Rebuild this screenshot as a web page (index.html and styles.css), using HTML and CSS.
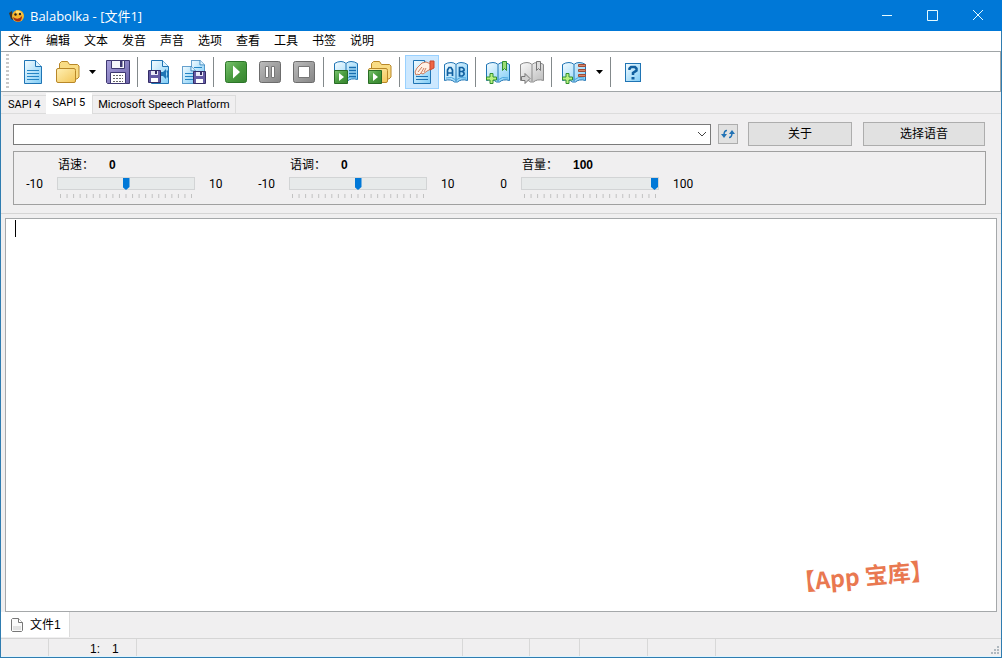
FILE: index.html
```html
<!DOCTYPE html>
<html lang="zh-CN">
<head>
<meta charset="utf-8">
<title>Balabolka - [文件1]</title>
<link rel="stylesheet" href="styles.css">
</head>
<body>
<svg class="defs" aria-hidden="true">
  <defs>
    <linearGradient id="blue" x1="0" y1="0" x2="1" y2="1"><stop offset="0" stop-color="#f4fcff"/><stop offset="1" stop-color="#7fccf6"/></linearGradient>
    <linearGradient id="gold" x1="0" y1="0" x2="1" y2="1"><stop offset="0" stop-color="#fff0b4"/><stop offset="1" stop-color="#f3c658"/></linearGradient>
    <linearGradient id="green" x1="0" y1="0" x2="1" y2="1"><stop offset="0" stop-color="#7cc470"/><stop offset=".5" stop-color="#4a9c40"/><stop offset="1" stop-color="#37842f"/></linearGradient>
    <linearGradient id="gray" x1="0" y1="0" x2="1" y2="1"><stop offset="0" stop-color="#bcbcbc"/><stop offset="1" stop-color="#858585"/></linearGradient>
    <linearGradient id="pale" x1="0" y1="0" x2="1" y2="1"><stop offset="0" stop-color="#fafafa"/><stop offset="1" stop-color="#bcbcbc"/></linearGradient>
    <linearGradient id="violet" x1="0" y1="0" x2="1" y2="1"><stop offset="0" stop-color="#aaa2dc"/><stop offset="1" stop-color="#6b62a8"/></linearGradient>
    <symbol id="page" viewBox="0 0 18 24" preserveAspectRatio="none"><path d="M.5 .5h11l6 6v17H.5z" fill="url(#blue)" stroke="#1f74b4"/><path d="M11.500 .5v6h6" fill="#dff4ff" stroke="#1f74b4"/></symbol>
    <symbol id="folder" viewBox="0 0 24 22"><path d="M3.500 17V2.500l2-2h6l2 3h8l1.500 1.500V16l-2 2z" fill="#f9dc84" stroke="#b88728"/><path d="M2 7.500h16q1.500 0 1.500 2V20q0 1.500-1.500 1.500H2Q.5 21.500.5 20V9q0-1.500 1.500-1.500z" fill="url(#gold)" stroke="#b88728"/></symbol>
    <symbol id="disk" viewBox="0 0 24 24"><path d="M.5 .5h23v23h-22l-1-1z" fill="url(#violet)" stroke="#3e3871"/><path d="M5.500 .5h13v8h-13z" fill="#f6f6fb" stroke="#3e3871"/><path d="M14 1h2.500v6H14z" fill="#3e3871"/><path d="M4.500 12.500h15v11h-15z" fill="#fff" stroke="#3e3871"/><path d="M7 15.500h10M7 18.500h10M7 21.500h10" stroke="#666" stroke-dasharray="2 1"/></symbol>
    <symbol id="minidisk" viewBox="0 0 13 13"><path d="M.5 .5h12v12H.5z" fill="#635aa4" stroke="#332c66"/><path d="M3 1h7v4H3z" fill="#e9e9f6"/><path d="M3 8h7v4H3z" fill="#fff"/><path d="M7 1h2v3H7z" fill="#332c66"/></symbol>
    <symbol id="book" viewBox="0 0 24 21"><path d="M.5 2.500Q3.500 .5 7 .5 10 .5 12 2.500 14 .5 17 .5q3.500 0 6.500 2v16q-3-1-6-.500-2.500 .5-4 2h-3q-1.500-1.500-4-2-3-.5-6 .5z" fill="url(#blue)" stroke="#1f74b4"/><path d="M12 3v16" stroke="#1f74b4"/><path d="M2 16q6-2 10 2 4-4 10-2" fill="none" stroke="#4aa6de"/></symbol>
    <symbol id="playbox" viewBox="0 0 14 14"><path d="M.5 .5h13v13H.5z" fill="url(#green)" stroke="#286c24"/><path d="M5 3v8l5-4z" fill="#fff"/></symbol>
    <symbol id="plus" viewBox="0 0 11 11"><path d="M4 .5h3V4h3.500v3H7v3.500H4V7H.5V4H4z" fill="#b9f080" stroke="#31902f"/></symbol>
  </defs>
</svg>
<div class="window">
  <header class="titlebar">
    <svg class="logo" width="16" height="16" viewBox="0 0 16 16"><path d="M0 5l3-2 1 9-2-1z" fill="#43331f"/><circle cx="9" cy="8" r="6" fill="#f6b52d"/><path d="M7 2.500l4 .5 3 4-2-1-5-1z" fill="#ffe174"/><path d="M4 9q5 4 9-1 0 6-4.500 5.500Q5 13 4 9z" fill="#a33016"/><circle cx="6.500" cy="6.500" r="1.200" fill="#222"/><circle cx="11" cy="6" r="1.200" fill="#222"/></svg>
    <h1 class="title">Balabolka - [文件1]</h1>
    <div class="controls">
      <button class="control" aria-label="最小化"><svg width="12" height="12" viewBox="0 0 12 12"><path d="M1 5.500h10"/></svg></button>
      <button class="control" aria-label="最大化"><svg width="12" height="12" viewBox="0 0 12 12"><path d="M.5 .5h10v10H.5z"/></svg></button>
      <button class="control" aria-label="关闭"><svg width="12" height="12" viewBox="0 0 12 12"><path d="M0 0l10 10M10 0L0 10"/></svg></button>
    </div>
  </header>
  <nav class="menu">
    <button>文件</button><button>编辑</button><button>文本</button><button>发音</button><button>声音</button><button>选项</button><button>查看</button><button>工具</button><button>书签</button><button>说明</button>
  </nav>
  <div class="toolbar" role="toolbar" aria-label="工具栏">
    <span class="grip"></span>
    <div class="group">
      <button class="tool" aria-label="新建"><svg width="26" height="26"><use href="#page" x="4" y="1" width="18" height="24"/><path d="M7 11.500h12M7 14.500h12M7 17.500h12M7 20.500h12" stroke="#2585c4"/></svg></button>
      <button class="tool" aria-label="打开"><svg width="26" height="26"><use href="#folder" x="2" y="2" width="24" height="22"/></svg></button>
      <button class="drop" aria-label="最近文件"><svg width="7" height="4"><path d="M0 0h7L3.500 4z"/></svg></button>
      <button class="tool" aria-label="保存"><svg width="26" height="26"><use href="#disk" x="1" y="1" width="24" height="24"/></svg></button>
    </div>
    <div class="group">
      <button class="tool" aria-label="保存音频文件"><svg width="26" height="26"><use href="#page" x="4" y="1" width="18" height="24"/><path d="M14 13h2l3-3v10l-3-3h-2z" fill="#1f74b4"/><path d="M20 11.500q2 3.500 0 7" fill="none" stroke="#1f74b4" stroke-width="1.500"/><use href="#minidisk" x="1" y="11" width="13" height="13"/></svg></button>
      <button class="tool" aria-label="分割并保存"><svg width="26" height="26"><use href="#page" x="10" y="1" width="14" height="18"/><use href="#page" x="1" y="7" width="14" height="18"/><path d="M4 14.500h8M4 17.500h8M4 20.500h8M13 8.500h8" stroke="#2585c4"/><use href="#minidisk" x="12" y="12" width="13" height="13"/></svg></button>
    </div>
    <div class="group">
      <button class="tool" aria-label="朗读"><svg width="26" height="26"><rect x="2.500" y="2.500" width="21" height="21" rx="2" fill="url(#green)" stroke="#2c7529"/><path d="M10 6.500v13l7-6.500z" fill="#fff"/></svg></button>
      <button class="tool" aria-label="暂停"><svg width="26" height="26"><rect x="2.500" y="2.500" width="21" height="21" rx="2" fill="url(#gray)" stroke="#6c6c6c"/><path d="M8.500 7.500h3v11h-3zM14.500 7.500h3v11h-3z" fill="#fff" stroke="#777"/></svg></button>
      <button class="tool" aria-label="停止"><svg width="26" height="26"><rect x="2.500" y="2.500" width="21" height="21" rx="2" fill="url(#gray)" stroke="#6c6c6c"/><path d="M7.500 7.500h11v11h-11z" fill="#fff" stroke="#777"/></svg></button>
    </div>
    <div class="group">
      <button class="tool" aria-label="朗读全部"><svg width="26" height="26"><use href="#book" x="1" y="2" width="24" height="21"/><path d="M16 8.500h7M16 11.500h7M16 14.500h7M16 17.500h7" stroke="#176eb0" stroke-width="1.500"/><use href="#playbox" x="1" y="11" width="14" height="14"/></svg></button>
      <button class="tool" aria-label="朗读文件"><svg width="26" height="26"><use href="#folder" x="1" y="2" width="24" height="22"/><use href="#playbox" x="1" y="11" width="14" height="14"/></svg></button>
    </div>
    <div class="group">
      <button class="tool active" aria-label="剪贴板监视" aria-pressed="true"><svg width="26" height="26"><use href="#page" x="4" y="1" width="18" height="24"/><path d="M7 17.500h12M7 20.500h12" stroke="#1f74b4"/><path d="M6 13l2-4 5-5 4-1 5 2v5l-4 2-4 3-2-1-2 2-1-1-2 1z" fill="#fff0e5" stroke="#cf7d5d"/><path d="M9 13l4-5M12 14l3-5M15 13l2-4" stroke="#cf7d5d"/><path d="M21 2h4v7l-4 2z" fill="#ef6545" stroke="#c9472d"/></svg></button>
      <button class="tool" aria-label="字典"><svg width="26" height="26"><use href="#book" x="1" y="3" width="24" height="21"/><path d="M4.500 17v-6L6 8.500h2L9.500 11v6M4.500 14h5M16.500 8.500h3l1.500 1.500v1.500l-1.500 1 1.500 1.500v1.500l-1.500 1.500h-3zM16.500 12.500h3" fill="none" stroke="#105f9f" stroke-width="1.700"/></svg></button>
    </div>
    <div class="group">
      <button class="tool" aria-label="添加书签"><svg width="26" height="26"><use href="#book" x="1" y="3" width="24" height="21"/><path d="M17.500 2.500h4v9l-2-2-2 2z" fill="#9cdb77" stroke="#31902f"/><use href="#plus" x="1" y="14" width="11" height="11"/></svg></button>
      <button class="tool" aria-label="转到书签"><svg width="26" height="26"><path d="M1.500 5.500Q4.500 3.500 8 3.500q3 0 5 2 2-2 5-2 3.500 0 6.500 2v16q-3-1-6-.5-2.500 .5-4 2h-3q-1.500-1.500-4-2-3-.5-6 .5z" fill="url(#pale)" stroke="#8b8b8b"/><path d="M13 6v16" stroke="#8b8b8b"/><path d="M17.500 2.500h4v9l-2-2-2 2z" fill="#ddd" stroke="#777"/><path d="M2.500 17.500H6v-3l5 5-5 5v-3H2.500z" fill="#d2d2d2" stroke="#777"/></svg></button>
    </div>
    <div class="group">
      <button class="tool" aria-label="添加快速书签"><svg width="26" height="26"><use href="#book" x="1" y="3" width="24" height="21"/><path d="M17.500 5.500h7v2h-7zM17.500 10.500h7v2h-7zM17.500 15.500h7v2h-7z" fill="#d9886c" stroke="#a04e38"/><use href="#plus" x="1" y="14" width="11" height="11"/></svg></button>
      <button class="drop" aria-label="书签列表"><svg width="7" height="4"><path d="M0 0h7L3.500 4z"/></svg></button>
    </div>
    <div class="group">
      <button class="tool" aria-label="帮助"><svg width="26" height="26"><rect x="5.500" y="4.500" width="15" height="18" fill="url(#blue)" stroke="#1f74b4"/><path d="M9.500 11V9.500L11 8h4l1.500 1.500v2L13 14v2" fill="none" stroke="#105f9f" stroke-width="2.500"/><path d="M11.500 18h3v2.500h-3z" fill="#105f9f"/></svg></button>
    </div>
  </div>
  <div class="tabs" role="tablist">
    <button class="tab" role="tab">SAPI 4</button><button class="tab selected" role="tab" aria-selected="true">SAPI 5</button><button class="tab" role="tab">Microsoft Speech Platform</button>
  </div>
  <section class="voice">
    <div class="voice-row">
      <div class="combo">
        <select class="select" aria-label="语音"><option></option></select>
        <svg class="chevron" width="10" height="6"><path d="M1 1l4 4 4-4"/></svg>
      </div>
      <button class="push refresh" aria-label="刷新"><svg width="14" height="10" viewBox="0 0 14 10"><path d="M6 1.500Q3 1.500 3 6M8 8.500q3 0 3-5" fill="none" stroke="#2272b5" stroke-width="1.500"/><path d="M0 5h6L3 9zM8 5h6l-3-4z" fill="#2272b5"/></svg></button>
      <button class="push about">关于</button>
      <button class="push choose">选择语音</button>
    </div>
    <div class="sliders">
      <div class="slider">
        <div class="caption"><label for="rate">语速：</label><output for="rate">0</output></div>
        <span class="min">-10</span>
        <input class="range" id="rate" type="range" min="-10" max="10" value="0">
        <span class="max">10</span>
        <svg class="ticks" width="138" height="4"><path d="M3 2h132"/></svg>
      </div>
      <div class="slider">
        <div class="caption"><label for="pitch">语调：</label><output for="pitch">0</output></div>
        <span class="min">-10</span>
        <input class="range" id="pitch" type="range" min="-10" max="10" value="0">
        <span class="max">10</span>
        <svg class="ticks" width="138" height="4"><path d="M3 2h132"/></svg>
      </div>
      <div class="slider">
        <div class="caption"><label for="volume">音量：</label><output for="volume">100</output></div>
        <span class="min">0</span>
        <input class="range" id="volume" type="range" min="0" max="100" value="100">
        <span class="max">100</span>
        <svg class="ticks" width="138" height="4"><path d="M3 2h132"/></svg>
      </div>
    </div>
  </section>
  <main class="editor">
    <textarea class="text" aria-label="文本"></textarea>
    <span class="caret"></span>
    <span class="watermark">【App 宝库】</span>
  </main>
  <div class="files">
    <button class="file"><svg width="12" height="14" viewBox="0 0 12 14"><path d="M1.500 .5h6l4 4v8l-1 1h-9l-1-1v-11z" fill="#fafafa" stroke="#777"/><path d="M7.500 .5v4h4" fill="#fff" stroke="#777"/><path d="M2 8h8v4H2z" fill="#e2e2e2"/></svg>文件1</button>
  </div>
  <footer class="status">
    <span class="cell"></span><span class="cell position"><span>1:</span><span>1</span></span><span class="cell wide"></span><span class="cell"></span><span class="cell"></span><span class="cell"></span><span class="cell"></span><span class="cell last"></span>
    <svg class="resize" width="9" height="9"><path d="M6 0h2v2H6zM3 3h2v2H3zM6 3h2v2H6zM0 6h2v2H0zM3 6h2v2H3zM6 6h2v2H6z" fill="#b0b8bf"/></svg>
  </footer>
</div>
</body>
</html>
```
FILE: styles.css
```css
* { box-sizing: border-box; }
body { margin: 0; font: 12px/16px "Liberation Sans", "Noto Sans CJK SC", sans-serif; color: #000; }
button { border: 0; padding: 0; background: none; font: inherit; color: inherit; }
svg { display: block; }
.defs { position: absolute; width: 0; height: 0; }
.window { display: flex; flex-direction: column; min-height: 100vh; border: 1px solid #2f7cb0; border-top: 0; background: #f0eff0; }

.titlebar { display: flex; align-items: center; height: 31px; margin: 0 -1px; padding-left: 9px; background: #0078d7; color: #fff; }
.title { flex: 1; margin: 0 0 0 5px; font: 13px/16px "Open Sans", "Noto Sans CJK SC", sans-serif; }
.controls { display: flex; }
.control { display: grid; place-items: center; width: 46px; height: 31px; }
.control path { fill: none; stroke: #e4fbff; }

.menu { display: flex; gap: 12px; height: 20px; padding-left: 6px; background: #fff; }
.menu button { width: 26px; white-space: nowrap; }

.toolbar { display: flex; align-items: center; height: 41px; border: 1px solid #a0a5a7; border-left: 0; background: #fff; }
.grip { width: 3px; height: 36px; margin: 0 7px 0 5px; background: repeating-linear-gradient(#c8c8c8 0 2px, #fff 2px 4px); }
.group { display: flex; align-items: center; }
.group + .group::before { content: ""; width: 1px; height: 30px; margin: 0 5px 0 2px; background: #83898b; }
.tool { display: grid; place-items: center; width: 34px; height: 34px; }
.tool.active { background: #cce8ff; border: 1px solid #99d1ff; }
.drop { display: grid; place-items: center; width: 17px; height: 34px; }

.tabs { display: flex; align-items: flex-end; height: 22px; padding-left: 2px; border-bottom: 1px solid #dcdcdc; }
.tab { height: 18px; padding: 0 5px; border: 1px solid #dcdcdc; border-bottom: 0; font-family: Roboto, "Liberation Sans", sans-serif; font-size: 11px; }
.tab:first-child { border-left: 0; border-right: 0; }
.tab.selected { height: 21px; padding: 0 6px 3px; margin-bottom: -1px; border-color: #fff; background: #fff; }

.voice { padding: 8px 15px 8px 12px; border-bottom: 1px solid #d5d5d5; }
.voice-row { display: flex; align-items: center; padding-right: 1px; }
.combo { flex: 1; display: grid; align-items: center; }
.select { grid-area: 1 / 1; width: 100%; height: 21px; border: 1px solid #7a7a7a; border-radius: 0; background: #fff; appearance: none; }
.chevron { grid-area: 1 / 1; justify-self: end; margin-right: 4px; fill: none; stroke: #444; pointer-events: none; }
.push { display: grid; place-items: center; height: 24px; border: 1px solid #adadad; background: #e1e1e1; }
.refresh { width: 20px; height: 20px; margin-left: 7px; }
.about { width: 104px; margin-left: 10px; }
.choose { width: 122px; margin-left: 11px; }
.sliders { display: flex; margin-top: 5px; border: 1px solid #a0a0a0; height: 54px; }
.slider { display: grid; grid-template-columns: 29px 138px 1fr; grid-template-rows: 16px 13px 4px; column-gap: 14px; row-gap: 4px; width: 232px; padding-top: 5px; font-family: Roboto, "Liberation Sans", sans-serif; font-size: 12px; }
.caption { grid-column: 2 / 4; display: flex; padding-left: 1px; font-family: "Liberation Sans", "Noto Sans CJK SC", sans-serif; }
.caption label { width: 51px; }
.caption output { font-weight: bold; }
.min { text-align: right; line-height: 15px; }
.max { line-height: 15px; }
.range { width: 100%; height: 13px; margin: 0; appearance: none; background: none; }
.range::-webkit-slider-runnable-track { height: 13px; border: 1px solid #d2d4d5; background: #e7eaea; }
.range::-webkit-slider-thumb { appearance: none; width: 7px; height: 12px; background: #0078d7; clip-path: polygon(0 0, 100% 0, 100% 75%, 50% 100%, 0 75%); }
.ticks { grid-column: 2; }
.ticks path { stroke: #c2c2c2; stroke-width: 4; stroke-dasharray: 1 5.55; }

.editor { flex: 1; display: flex; position: relative; margin: 4px 4px 0; }
.text { flex: 1; min-height: 80px; padding: 2px 8px; border: 1px solid #a5a8aa; background: #fff; resize: none; outline: 0; }
.caret { position: absolute; left: 10px; top: 2px; width: 1px; height: 17px; background: #000; }
.watermark { position: absolute; right: 63px; bottom: 19px; font: 700 23px/36px "Noto Sans CJK SC", sans-serif; color: #e97850; transform: rotate(-5deg); white-space: nowrap; }

.files { height: 26px; }
.file { display: flex; align-items: center; gap: 7px; height: 25px; padding: 0 8px 0 10px; background: #fff; border-right: 1px solid #dcdcdc; }
.status { display: flex; height: 19px; border-top: 1px solid #d5d5d5; border-bottom: 1px solid #dff4ff; position: relative; }
.cell { width: 68px; border-right: 1px solid #d8d8d8; }
.cell:first-child { width: 48px; }
.position { display: flex; gap: 12px; width: 88px; padding-left: 41px; line-height: 20px; }
.cell.wide { flex: 1; }
.cell.wide + .cell { width: 67px; }
.cell.wide + .cell + .cell { width: 50px; }
.cell.last { width: 285px; border-right: 0; }
.resize { position: absolute; right: 1px; bottom: 1px; }
```
